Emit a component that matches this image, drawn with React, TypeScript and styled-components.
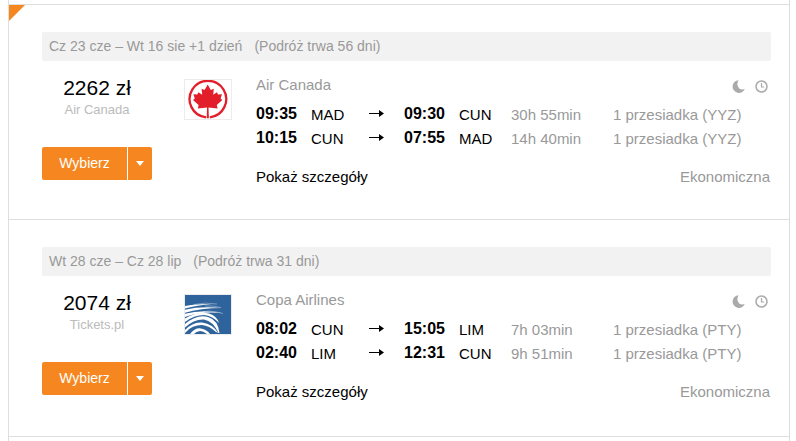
import React from 'react';
import styled, { createGlobalStyle } from 'styled-components';

const GlobalStyle = createGlobalStyle`
  * { box-sizing: border-box; }
  body {
    margin: 0;
    background: #fff;
    color: #000;
    font-family: 'Liberation Sans', Arial, sans-serif;
    font-size: 15px;
    line-height: 18px;
  }
`;

const Results = styled.main`
  min-height: 100vh;
  margin: 0 6px 0 8px;
  padding-top: 4px;
  border: solid #dedede;
  border-width: 0 1px;
`;

const Card = styled.article`
  position: relative;
  padding: 27px 18px 33px 33px;
  border-top: 1px solid #dedede;
  &:last-child {
    padding-bottom: 35px;
    border-bottom: 1px solid #dedede;
  }
`;

const CornerMark = styled.span`
  position: absolute;
  top: 0;
  left: 0;
  width: 16px;
  height: 16px;
  background: #f68720;
  clip-path: polygon(0 0, 100% 0, 0 100%);
`;

const TripHeader = styled.header`
  display: flex;
  gap: 12px;
  padding: 0 7px;
  border-radius: 2px;
  background: #f2f2f2;
  color: #999;
  font-size: 14px;
  line-height: 29px;
`;

const TripBody = styled.div`
  display: flex;
  align-items: flex-start;
  padding-top: 15px;
`;

const Offer = styled.div`
  flex: none;
  width: 110px;
  text-align: center;
`;

const Price = styled.div`
  font-size: 21px;
  line-height: 24px;
`;

const Seller = styled.div`
  color: #bbb;
  font-size: 13px;
  line-height: 20px;
`;

const SplitButton = styled.div`
  display: flex;
  gap: 1px;
  margin-top: 27px;
`;

const SelectButton = styled.button`
  flex: 1;
  height: 33px;
  padding: 0 0 2px;
  border: 0;
  border-radius: 2px 0 0 2px;
  background: #f68720;
  color: #fff;
  font: 14px 'Liberation Sans', Arial, sans-serif;
  cursor: pointer;
`;

const MoreButton = styled(SelectButton)`
  display: flex;
  flex: none;
  align-items: center;
  justify-content: center;
  width: 24px;
  padding: 0;
  border-radius: 0 2px 2px 0;
`;

const LogoBox = styled.div`
  display: flex;
  flex: none;
  margin: 3px 24px 0 32px;
  border: 1px solid #ececec;
`;

const Details = styled.div`
  flex: 1;
  min-width: 0;
`;

const DetailRow = styled.div`
  display: flex;
  align-items: center;
  justify-content: space-between;
  padding-right: 1px;
  color: #999;
`;

const Badges = styled.div`
  display: flex;
  gap: 10px;
  padding: 2px 2px 0 0;
`;

const Legs = styled.table`
  width: 100%;
  margin: 8px 0 18px;
  border-collapse: collapse;
  table-layout: fixed;
`;

const Cell = styled.td<{ $muted?: boolean }>`
  height: 24px;
  padding: 2px 0 0;
  color: ${(p) => (p.$muted ? '#999' : '#000')};
  line-height: 22px;
  white-space: nowrap;
  svg { display: block; }
`;

const TimeCell = styled(Cell)`
  padding: 0 0 1px;
  font-size: 16px;
  font-weight: bold;
`;

const ArrowCell = styled(Cell)`
  padding: 0 0 2px;
`;

const DetailsLink = styled.a`
  color: #000;
  text-decoration: none;
`;

const Arrow = () => (
  <svg width="15" height="7" viewBox="0 0 15 7" role="img" aria-label="do">
    <path d="M0 3h10V0l5 3.5L10 7V4H0z" />
  </svg>
);

const Caret = () => (
  <svg width="8" height="5" viewBox="0 0 8 5" aria-hidden="true">
    <path d="M0 0h8L4 5z" fill="#fff" />
  </svg>
);

const Moon = () => (
  <svg width="13" height="13" viewBox="0 0 13 13" role="img" aria-label="Lot nocny">
    <path d="M6.500 .3A6.300 6.300 0 1 0 12.800 8.800Q10 10.400 7.200 8.400Q3.900 5.200 6.500 .3z" fill="#aaa" />
  </svg>
);

const Clock = () => (
  <svg width="13" height="13" viewBox="0 0 13 13" fill="none" stroke="#aaa" role="img" aria-label="Długie oczekiwanie">
    <circle cx="6.5" cy="6.5" r="5.5" strokeWidth="1.5" />
    <path d="M6.500 3v4h2.700" strokeWidth="1.200" />
  </svg>
);

const MapleLogo = () => (
  <svg width="46" height="39" viewBox="0 0 46 39" role="img" aria-label="Air Canada">
    <path d="M21 37.300A18.300 18.300 0 1 1 24.800 37.300" fill="none" stroke="#e31e2b" strokeWidth="2.300" />
    <path
      d="M22.700 4.500L25.800 10L28.800 8.800L28.200 14.800L32 12.300L33 14.600L37 14.200L35.600 18.600L37.300 20L31.800 25L32.600 28.600L23.500 27.600L23.900 38.300H21.700L22 27.600L12.800 28.600L13.600 25L8 20L9.800 18.600L8.400 14.200L12.400 14.600L13.400 12.300L17.200 14.800L16.600 8.800L19.600 10z"
      fill="#e31e2b"
    />
  </svg>
);

const CopaLogo = () => (
  <svg width="46" height="39" viewBox="0 0 46 39" fill="none" role="img" aria-label="Copa Airlines">
    <rect width="46" height="39" fill="#2f639b" />
    <g fill="#fff">
      <path d="M0 11Q11 8.500 27 9Q12 10 0 13.500z" />
      <path d="M0 14.800Q15 11 37 13Q15 13 0 17.800z" />
      <path d="M0 18.800Q17 14 37 18Q16 16 0 22z" />
      <path d="M0 23.500Q13 15.500 24 18.500Q32 21 34 28Q27 20.500 19 20Q9 20 0 27z" />
      <path d="M0 29Q12 19 23 22Q33 25 34.500 38L33.500 38Q28 26 19 24.500Q9 24 0 32.500z" />
      <path d="M0 35Q8 26.500 17 27.500Q28 29 33 38L31 37Q24 30.500 17 30Q7 30 1 37L0 38z" />
      <path d="M5 39Q10 32.500 16 33.500Q22 34.500 25 39H22Q18 36 15 36Q11 36.500 9 39z" />
    </g>
    <path d="M9 9.500Q20 7 32 9M20 11Q28 10.500 36 12.500M22 16Q30 16 38 18.500" stroke="#a9c0d8" strokeWidth=".6" />
  </svg>
);

interface Leg {
  depart: string;
  from: string;
  arrive: string;
  to: string;
  duration: string;
  stops: string;
}

interface Trip {
  dates: string;
  length: string;
  price: string;
  seller: string;
  airline: string;
  Logo: React.FC;
  featured?: boolean;
  legs: Leg[];
}

const trips: Trip[] = [
  {
    dates: 'Cz 23 cze – Wt 16 sie +1 dzień',
    length: '(Podróż trwa 56 dni)',
    price: '2262 zł',
    seller: 'Air Canada',
    airline: 'Air Canada',
    Logo: MapleLogo,
    featured: true,
    legs: [
      { depart: '09:35', from: 'MAD', arrive: '09:30', to: 'CUN', duration: '30h 55min', stops: '1 przesiadka (YYZ)' },
      { depart: '10:15', from: 'CUN', arrive: '07:55', to: 'MAD', duration: '14h 40min', stops: '1 przesiadka (YYZ)' },
    ],
  },
  {
    dates: 'Wt 28 cze – Cz 28 lip',
    length: '(Podróż trwa 31 dni)',
    price: '2074 zł',
    seller: 'Tickets.pl',
    airline: 'Copa Airlines',
    Logo: CopaLogo,
    legs: [
      { depart: '08:02', from: 'CUN', arrive: '15:05', to: 'LIM', duration: '7h 03min', stops: '1 przesiadka (PTY)' },
      { depart: '02:40', from: 'LIM', arrive: '12:31', to: 'CUN', duration: '9h 51min', stops: '1 przesiadka (PTY)' },
    ],
  },
];

const Column = styled.col<{ $width?: number }>`
  width: ${(p) => (p.$width ? `${p.$width}px` : 'auto')};
`;

const columnWidths = [55, 58, 35, 55, 52, 102, undefined];

const TripCard = ({ trip }: { trip: Trip }) => (
  <Card>
    {trip.featured && <CornerMark />}
    <TripHeader>
      <span>{trip.dates}</span>
      <span>{trip.length}</span>
    </TripHeader>
    <TripBody>
      <Offer>
        <Price>{trip.price}</Price>
        <Seller>{trip.seller}</Seller>
        <SplitButton>
          <SelectButton type="button">Wybierz</SelectButton>
          <MoreButton type="button" aria-label="Więcej ofert">
            <Caret />
          </MoreButton>
        </SplitButton>
      </Offer>
      <LogoBox>
        <trip.Logo />
      </LogoBox>
      <Details>
        <DetailRow>
          <span>{trip.airline}</span>
          <Badges>
            <Moon />
            <Clock />
          </Badges>
        </DetailRow>
        <Legs>
          <colgroup>
            {columnWidths.map((width, i) => (
              <Column key={i} $width={width} />
            ))}
          </colgroup>
          <tbody>
            {trip.legs.map((leg) => (
              <tr key={leg.depart}>
                <TimeCell>{leg.depart}</TimeCell>
                <Cell>{leg.from}</Cell>
                <ArrowCell>
                  <Arrow />
                </ArrowCell>
                <TimeCell>{leg.arrive}</TimeCell>
                <Cell>{leg.to}</Cell>
                <Cell $muted>{leg.duration}</Cell>
                <Cell $muted>{leg.stops}</Cell>
              </tr>
            ))}
          </tbody>
        </Legs>
        <DetailRow>
          <DetailsLink href="#details">Pokaż szczegóły</DetailsLink>
          <span>Ekonomiczna</span>
        </DetailRow>
      </Details>
    </TripBody>
  </Card>
);

export default function App() {
  return (
    <>
      <GlobalStyle />
      <Results>
        {trips.map((trip) => (
          <TripCard key={trip.price} trip={trip} />
        ))}
      </Results>
    </>
  );
}
